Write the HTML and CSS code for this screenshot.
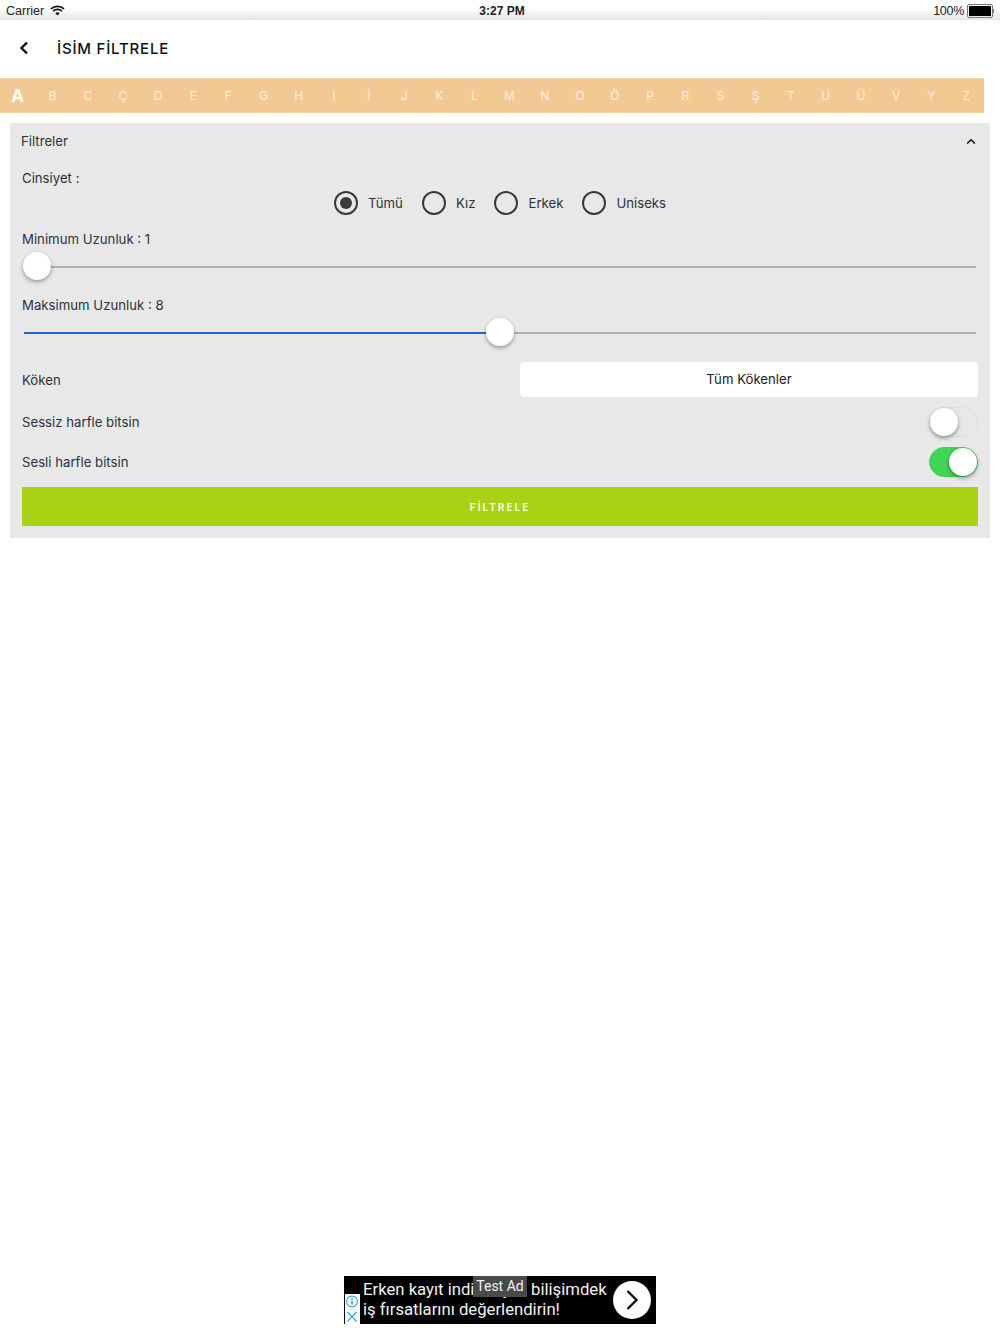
FILE: index.html
```html
<!DOCTYPE html>
<html lang="tr">
<head>
    <meta charset="UTF-8">
    <meta name="viewport" content="width=device-width, initial-scale=1.0">
    <title>İsim Filtrele</title>
    <link rel="stylesheet" href="styles.css">
</head>
<body>

<div class="page">
    <div class="status-bar">
        <div class="status-left">
            <span>Carrier</span>
            <svg class="wifi" width="15" height="11" viewBox="0 0 15 11">
                <path d="M7.5 10.6 5.3 8.2a3.2 3.2 0 0 1 4.4 0z" fill="#111"/>
                <path d="M1 3.9a9.4 9.4 0 0 1 13 0M3.2 6.2a6.2 6.2 0 0 1 8.6 0" fill="none" stroke="#111" stroke-width="1.8"/>
            </svg>
        </div>
        <div class="status-time">3:27 PM</div>
        <div class="status-right">
            <span class="status-percent">100%</span>
            <div class="battery"><div class="battery-fill"></div></div>
            <div class="battery-tip"></div>
        </div>
    </div>

    <div class="header">
        <svg class="back" width="10" height="14" viewBox="0 0 10 14">
            <path d="M8 1.5 2.5 7 8 12.5" fill="none" stroke="#111" stroke-width="2.4"/>
        </svg>
        <h1>İSİM FİLTRELE</h1>
    </div>

    <div class="alphabet">
        <span class="active">A</span>
        <span>B</span>
        <span>C</span>
        <span>Ç</span>
        <span>D</span>
        <span>E</span>
        <span>F</span>
        <span>G</span>
        <span>H</span>
        <span>I</span>
        <span>İ</span>
        <span>J</span>
        <span>K</span>
        <span>L</span>
        <span>M</span>
        <span>N</span>
        <span>O</span>
        <span>Ö</span>
        <span>P</span>
        <span>R</span>
        <span>S</span>
        <span>Ş</span>
        <span>T</span>
        <span>U</span>
        <span>Ü</span>
        <span>V</span>
        <span>Y</span>
        <span>Z</span>
    </div>

    <div class="panel">
        <div class="panel-header">
            <span>Filtreler</span>
            <svg width="10" height="7" viewBox="0 0 10 7">
                <path d="M1.2 5.5 5 1.8l3.8 3.7" fill="none" stroke="#111" stroke-width="1.6"/>
            </svg>
        </div>

        <div class="panel-body">
            <div class="label gender-label">Cinsiyet :</div>
            <div class="radio-group">
                <div class="radio-item"><span class="radio checked"></span>Tümü</div>
                <div class="radio-item"><span class="radio"></span>Kız</div>
                <div class="radio-item"><span class="radio"></span>Erkek</div>
                <div class="radio-item"><span class="radio"></span>Uniseks</div>
            </div>

            <div class="label min-label">Minimum Uzunluk : 1</div>
            <div class="slider">
                <div class="track"></div>
                <div class="thumb" style="left: 1px"></div>
            </div>

            <div class="label max-label">Maksimum Uzunluk : 8</div>
            <div class="slider">
                <div class="track"></div>
                <div class="track-fill" style="width: 477px"></div>
                <div class="thumb" style="left: 464px"></div>
            </div>

            <div class="row origin-row">
                <div class="label">Köken</div>
                <div class="origin-button">Tüm Kökenler</div>
            </div>
            <div class="row switch-row">
                <div class="label">Sessiz harfle bitsin</div>
                <div class="switch"><span class="knob"></span></div>
            </div>
            <div class="row switch-row">
                <div class="label">Sesli harfle bitsin</div>
                <div class="switch on"><span class="knob"></span></div>
            </div>

            <div class="filter-button">FİLTRELE</div>
        </div>
    </div>

    <div class="ad">
        <div class="ad-icons">
            <svg width="14" height="15" viewBox="0 0 14 15">
                <circle cx="7" cy="7.5" r="5.4" fill="none" stroke="#2ba6de" stroke-width="1.1"/>
                <path d="M7 6.5v4M7 4v1.5" stroke="#2ba6de" stroke-width="1.6"/>
            </svg>
            <svg width="14" height="15" viewBox="0 0 14 15">
                <path d="M2.5 3 11.5 12.500M11.500 3 2.500 12.500" stroke="#2ba6de" stroke-width="1.1"/>
            </svg>
        </div>
        <div class="ad-text">Erken kayıt indirimiyle, bilişimdek<br>iş fırsatlarını değerlendirin!</div>
        <div class="ad-arrow">
            <svg width="14" height="22" viewBox="0 0 14 22">
                <path d="M2.500 2 11.500 11 2.500 20" fill="none" stroke="#111" stroke-width="2.400"/>
            </svg>
        </div>
        <div class="test-ad">Test Ad</div>
    </div>
</div>

</body>
</html>
```

FILE: styles.css
```css
body {
    font-family: Inter, "Open Sans", sans-serif;
    background-color: #fff;
    color: #2e3238;
    margin: 0;
    padding: 0;
}
.page {
    height: 1334px;
    display: flex;
    flex-direction: column;
    overflow: hidden;
}

/* barra de status */
.status-bar {
    height: 20px;
    box-sizing: border-box;
    padding: 1px 6px 0;
    display: grid;
    grid-template-columns: 1fr auto 1fr;
    align-items: center;
    background: linear-gradient(#fff 40%, #e4e4e4);
    font-family: "Liberation Sans", Arial, sans-serif;
    font-size: 12.500px;
    color: #222;
}
.status-left {
    display: flex;
    align-items: center;
    gap: 6px;
}
.status-time {
    font-weight: bold;
    font-size: 12px;
    margin-left: 4px;
}
.status-right {
    display: flex;
    align-items: center;
    justify-content: flex-end;
}
.status-percent {
    letter-spacing: -0.300px;
}
.battery {
    width: 22px;
    height: 10px;
    margin-left: 3px;
    padding: 1px;
    border: 1px solid #777;
    border-radius: 2px;
}
.battery-fill {
    height: 100%;
    background-color: #000;
}
.battery-tip {
    width: 1px;
    height: 4px;
    background-color: #777;
}

/* cabecalho */
.header {
    height: 58px;
    box-sizing: border-box;
    padding: 0 0 2px 19px;
    display: flex;
    align-items: center;
}
.header h1 {
    margin: 0 0 0 28px;
    font-size: 15px;
    font-weight: 500;
    letter-spacing: 0.800px;
    color: #111;
}

/* alfabeto */
.alphabet {
    width: 984px;
    height: 35px;
    box-sizing: border-box;
    display: flex;
    align-items: center;
    background-color: #f2c992;
    border-top: 1px solid #f6d3a6;
    border-bottom: 1px solid #f6d3a6;
}
.alphabet span {
    flex: 1;
    text-align: center;
    color: #fbf3e6;
    font-size: 12px;
}
.alphabet .active {
    color: #fff;
    font-size: 17px;
    font-weight: 700;
}

/* painel de filtros */
.panel {
    margin: 10px 10px 0;
    height: 415px;
    background-color: #e8e8e8;
}
.panel-header {
    height: 36px;
    display: flex;
    align-items: center;
    justify-content: space-between;
    padding: 0 14px 0 11px;
    font-size: 13.200px;
}
.panel-body {
    padding: 0 12px;
}
.label {
    font-size: 13.200px;
    line-height: 16px;
}
.gender-label {
    margin-top: 11px;
}
.radio-group {
    display: flex;
    justify-content: center;
    gap: 19px;
    margin-top: 4px;
}
.radio-item {
    display: flex;
    align-items: center;
    gap: 10px;
    height: 26px;
    font-size: 13.200px;
}
.radio {
    width: 24px;
    height: 24px;
    box-sizing: border-box;
    border: 2px solid #3a3a3a;
    border-radius: 50%;
    display: flex;
    align-items: center;
    justify-content: center;
}
.radio.checked::after {
    content: "";
    width: 12px;
    height: 12px;
    border-radius: 50%;
    background-color: #3a3a3a;
}
.min-label {
    margin-top: 15px;
}
.max-label {
    margin-top: 13px;
}
.slider {
    height: 34px;
    margin-top: 3px;
    position: relative;
}
.track {
    position: absolute;
    left: 2px;
    right: 2px;
    top: 16px;
    height: 2px;
    background-color: #b0b0b0;
}
.track-fill {
    position: absolute;
    left: 2px;
    top: 16px;
    height: 2px;
    background-color: #1a66e8;
}
.thumb {
    position: absolute;
    top: 2px;
    width: 28px;
    height: 28px;
    border-radius: 50%;
    background-color: #fff;
    box-shadow: 0 2px 4px rgba(0, 0, 0, 0.35);
}
.row {
    display: flex;
    align-items: center;
    justify-content: space-between;
}
.origin-row {
    margin-top: 12px;
}
.origin-button {
    width: 458px;
    height: 35px;
    line-height: 35px;
    text-align: center;
    background-color: #fff;
    border-radius: 4px;
    font-size: 13.200px;
    color: #222;
}
.switch-row {
    height: 30px;
    margin-top: 10px;
}
.switch {
    width: 49px;
    height: 30px;
    box-sizing: border-box;
    border: 1px solid #e0e0e0;
    border-radius: 15px;
    display: flex;
    align-items: center;
}
.switch.on {
    justify-content: flex-end;
    background-color: #41d558;
    border-color: #41d558;
}
.knob {
    width: 28px;
    height: 28px;
    border-radius: 50%;
    background-color: #fff;
    box-shadow: 0 2px 4px rgba(0, 0, 0, 0.4);
}
.filter-button {
    height: 39px;
    line-height: 40px;
    margin-top: 10px;
    text-align: center;
    background-color: #a9d115;
    color: #f4f8df;
    font-size: 10px;
    font-weight: 700;
    letter-spacing: 2px;
}

/* anuncio */
.ad {
    width: 312px;
    height: 48px;
    margin: auto auto 10px;
    position: relative;
    display: flex;
    align-items: center;
    background-color: #000;
    color: #f2f2f2;
}
.ad-icons {
    width: 15px;
    height: 30px;
    margin: 18px 3px 0 1px;
    background-color: #fff;
    display: flex;
    flex-direction: column;
}
.ad-text {
    flex: 1;
    font-family: Roboto, Arial, sans-serif;
    font-size: 16.700px;
    line-height: 20px;
    white-space: nowrap;
}
.ad-arrow {
    width: 38px;
    height: 38px;
    margin: 0 5px;
    flex-shrink: 0;
    border-radius: 50%;
    background-color: #fff;
    display: flex;
    align-items: center;
    justify-content: center;
}
.test-ad {
    position: absolute;
    left: 129px;
    top: 0;
    width: 54px;
    height: 21px;
    line-height: 21px;
    text-align: center;
    background-color: #4a4a4a;
    color: #f2f2f2;
    font-family: Roboto, Arial, sans-serif;
    font-size: 14px;
}
```
